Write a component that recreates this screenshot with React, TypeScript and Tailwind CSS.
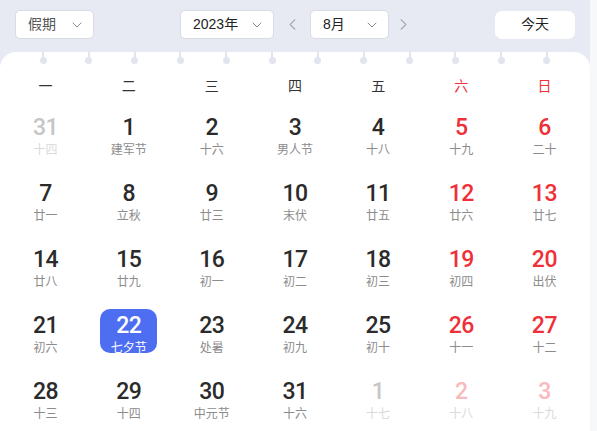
import { ChevronDown, ChevronLeft, ChevronRight } from "lucide-react";

// Month calendar with lunar dates. Static data for Aug 2023.

type Day = { d: number; lunar: string; other?: boolean; selected?: boolean };

const WEEK = ["一", "二", "三", "四", "五", "六", "日"];

const DAYS: Day[] = [
  { d: 31, lunar: "十四", other: true },
  { d: 1, lunar: "建军节" },
  { d: 2, lunar: "十六" },
  { d: 3, lunar: "男人节" },
  { d: 4, lunar: "十八" },
  { d: 5, lunar: "十九" },
  { d: 6, lunar: "二十" },
  { d: 7, lunar: "廿一" },
  { d: 8, lunar: "立秋" },
  { d: 9, lunar: "廿三" },
  { d: 10, lunar: "末伏" },
  { d: 11, lunar: "廿五" },
  { d: 12, lunar: "廿六" },
  { d: 13, lunar: "廿七" },
  { d: 14, lunar: "廿八" },
  { d: 15, lunar: "廿九" },
  { d: 16, lunar: "初一" },
  { d: 17, lunar: "初二" },
  { d: 18, lunar: "初三" },
  { d: 19, lunar: "初四" },
  { d: 20, lunar: "出伏" },
  { d: 21, lunar: "初六" },
  { d: 22, lunar: "七夕节", selected: true },
  { d: 23, lunar: "处暑" },
  { d: 24, lunar: "初九" },
  { d: 25, lunar: "初十" },
  { d: 26, lunar: "十一" },
  { d: 27, lunar: "十二" },
  { d: 28, lunar: "十三" },
  { d: 29, lunar: "十四" },
  { d: 30, lunar: "中元节" },
  { d: 31, lunar: "十六" },
  { d: 1, lunar: "十七", other: true },
  { d: 2, lunar: "十八", other: true },
  { d: 3, lunar: "十九", other: true },
];

const CJK = "font-['Liberation_Sans','Noto_Sans_CJK_SC',sans-serif]";

function Select({ label, width, muted }: { label: string; width: string; muted?: boolean }) {
  return (
    <div
      className={`flex h-[29px] items-center justify-between rounded-[5px] border border-[#d9dce4] bg-white pl-[12px] pr-[8px] ${width}`}
    >
      <span className={`text-[14px] ${muted ? "text-[#555]" : "text-[#222]"}`}>{label}</span>
      <ChevronDown size={16} strokeWidth={1.4} className="text-[#7d828c]" />
    </div>
  );
}

function Cell({ day, col }: { day: Day; col: number }) {
  const weekend = col >= 5;
  let num = weekend ? "text-[#ef3038]" : "text-[#2b2b2b]";
  let lunar = "text-[#8c8c8c]";
  if (day.other) {
    num = weekend ? "text-[#fab9bc]" : "text-[#c6c6c6]";
    lunar = "text-[#dadada]";
  }
  if (day.selected) {
    num = "text-white";
    lunar = "text-white";
  }
  return (
    <div className="flex justify-center">
      <div
        className={`flex h-[44px] w-[57px] flex-col items-center rounded-[10px] pt-[5px] ${
          day.selected ? "bg-[#4e6ef2]" : ""
        }`}
      >
        <span
          className={`font-[Roboto,sans-serif] text-[23px] leading-[24px] font-medium tracking-[-0.5px] ${num}`}
        >
          {day.d}
        </span>
        <span className={`mt-[3px] text-[12px] leading-[14px] ${lunar}`}>{day.lunar}</span>
      </div>
    </div>
  );
}

export default function App() {
  return (
    <div className={`flex h-[431px] w-[597px] overflow-hidden bg-[#f7f8fa] ${CJK}`}>
      <div className="flex w-[590px] flex-col bg-[#e8eaf3]">
        <div className="flex h-[52px] items-center px-[15px] pb-[3px]">
          <Select label="假期" width="w-[79px]" muted />
          <div className="ml-[86px] flex items-center">
            <Select label="2023年" width="w-[94px]" />
            <button type="button" className="flex w-[36px] justify-center text-[#a5a9b2]">
              <ChevronLeft size={19} strokeWidth={1.4} />
            </button>
            <Select label="8月" width="w-[79px]" />
            <button type="button" className="flex w-[28px] justify-center text-[#a5a9b2]">
              <ChevronRight size={19} strokeWidth={1.4} />
            </button>
          </div>
          <button
            type="button"
            className="ml-auto h-[28px] w-[80px] rounded-[7px] bg-white text-[14px] text-[#222]"
          >
            今天
          </button>
        </div>

        <div className="flex-1 rounded-t-[16px] bg-white">
          {/* binder rings */}
          <div className="flex justify-between px-[39px]">
            {Array.from({ length: 12 }).map((_, i) => (
              <div key={i} className="flex w-[8px] flex-col items-center">
                <div className="h-[6px] w-[2px] bg-[#e3e5ee]" />
                <div className="h-[7px] w-[7px] -translate-y-[1px] rounded-full bg-[#e3e5ee]" />
              </div>
            ))}
          </div>

          <div className="px-[4px]">
            <div className="grid h-[34px] grid-cols-7 items-center pt-[8px]">
              {WEEK.map((w, i) => (
                <div
                  key={w}
                  className={`text-center text-[14px] ${i >= 5 ? "text-[#ef3038]" : "text-[#333]"}`}
                >
                  {w}
                </div>
              ))}
            </div>
            <div className="mt-[12px] grid grid-cols-7 gap-y-[22px]">
              {DAYS.map((day, i) => (
                <Cell key={i} day={day} col={i % 7} />
              ))}
            </div>
          </div>
        </div>
      </div>
    </div>
  );
}
